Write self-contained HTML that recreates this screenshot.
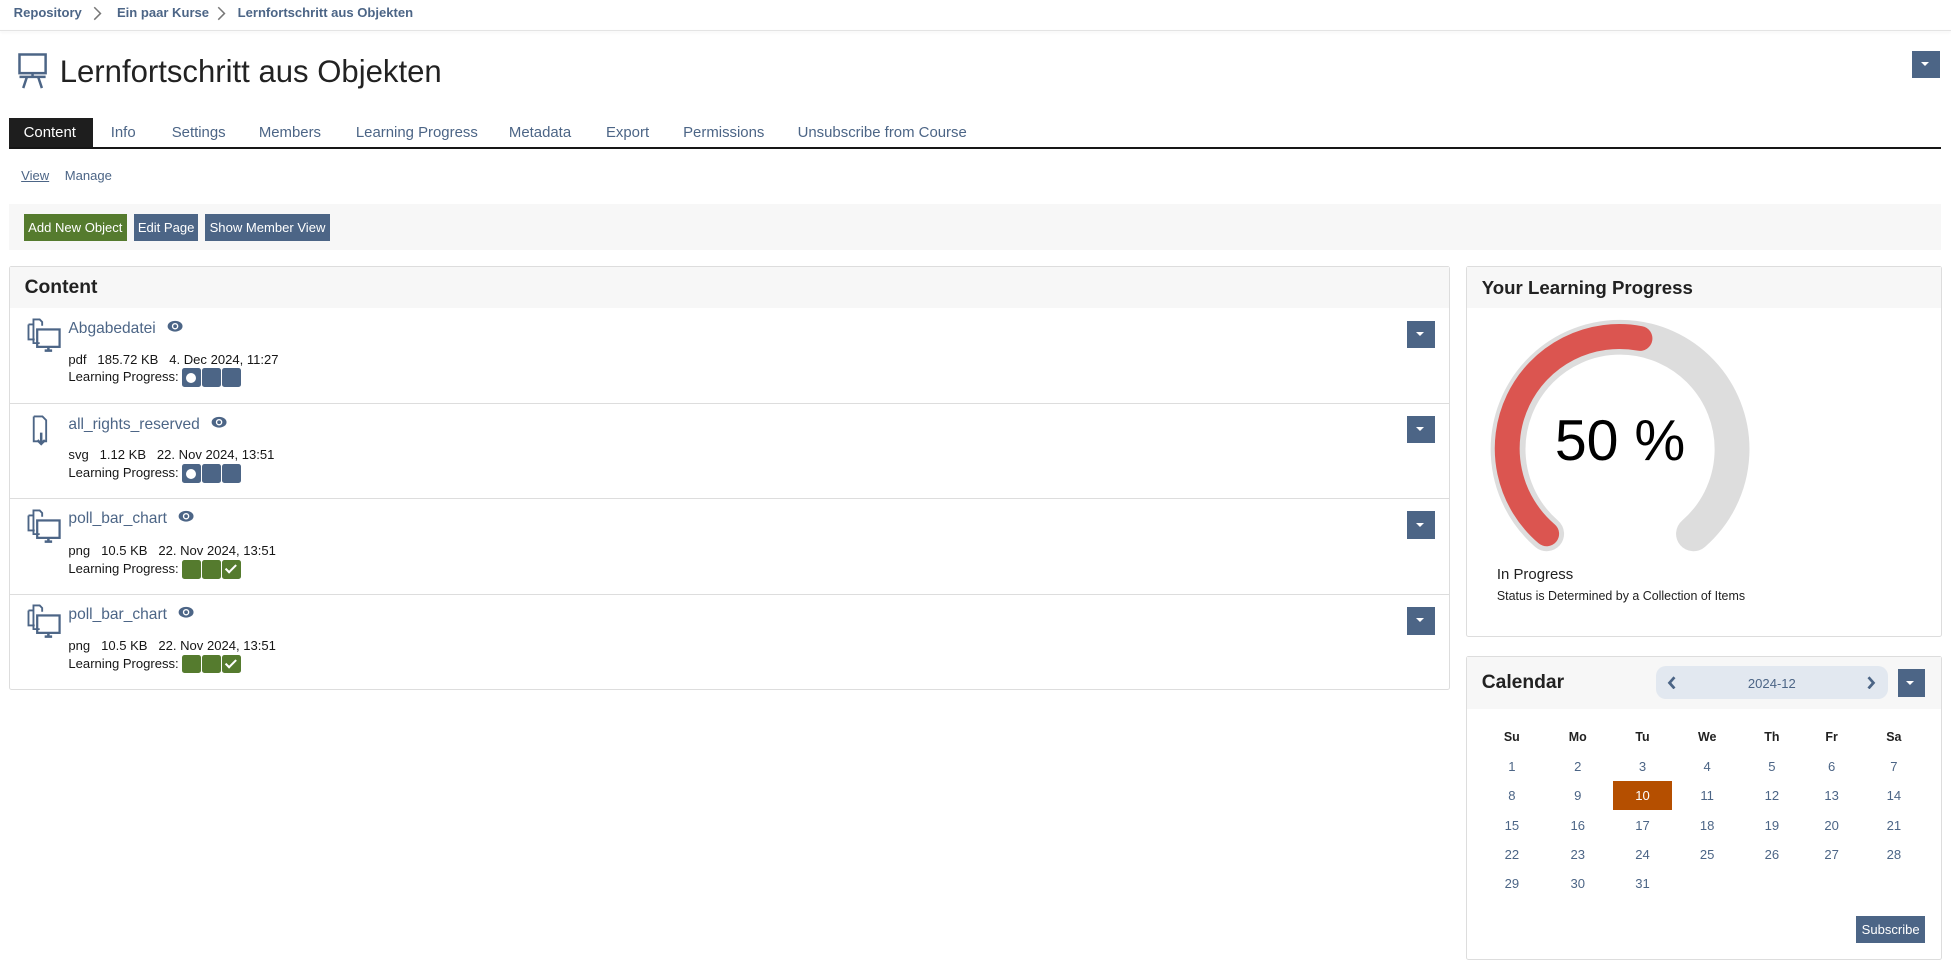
<!DOCTYPE html>
<html><head><meta charset="utf-8">
<style>
html,body{margin:0;padding:0;background:#fff;overflow:hidden;width:1951px;height:967px}
#w{zoom:1.2443;width:1568px;height:777px;position:relative;font-family:"Liberation Sans",sans-serif;color:#161616}
.a{position:absolute;white-space:nowrap}
.lnk{color:#4c6586}
.btn{position:absolute;height:22px;line-height:22px;color:#fff;font-size:10.5px;text-align:center;background:#4c6586}
.dd{position:absolute;width:22px;height:22px;background:#4c6586}
.dd:after{content:"";position:absolute;left:7px;top:9px;border-left:4px solid transparent;border-right:4px solid transparent;border-top:4px solid #fff}
.panel{position:absolute;border:1px solid #ddd;border-radius:2px;background:#fff}
.ph{position:absolute;left:0;right:0;top:0;height:33px;background:#f7f7f7}
.sq{display:inline-block;width:15px;height:15px;background:#4c6586;vertical-align:middle;margin-right:1px;position:relative;border-radius:2px}
.g{background:#557b2e}
.dot:after{content:"";position:absolute;left:3px;top:4px;width:8px;height:8px;border-radius:50%;background:#fff}
.chk:after{content:"";position:absolute;left:5px;top:2px;width:3px;height:7px;border:solid #fff;border-width:0 2px 2px 0;transform:rotate(45deg)}
.cal{position:absolute;font-size:10.5px;color:#4c6586;text-align:center;width:40px}
.tab{position:absolute;top:100px;font-size:12px;color:#4c6586;white-space:nowrap}
.eye{display:inline-block;vertical-align:middle;margin-left:9px;margin-top:-4px}
</style></head><body><div id="w">
<!-- breadcrumb -->
<div class="a lnk" style="left:11px;top:4px;font-size:10.5px;font-weight:bold">Repository</div>
<svg class="a" style="left:75px;top:5px" width="8" height="12" viewBox="0 0 8 12"><path d="M1 1l5 5-5 5" fill="none" stroke="#777" stroke-width="1.2"/></svg>
<div class="a lnk" style="left:94px;top:4px;font-size:10.5px;font-weight:bold">Ein paar Kurse</div>
<svg class="a" style="left:174px;top:5px" width="8" height="12" viewBox="0 0 8 12"><path d="M1 1l5 5-5 5" fill="none" stroke="#777" stroke-width="1.2"/></svg>
<div class="a lnk" style="left:191px;top:4px;font-size:10.5px;font-weight:bold">Lernfortschritt aus Objekten</div>
<div class="a" style="left:0;top:24px;width:1568px;height:1px;background:#e4e4e4;box-shadow:0 1px 2px rgba(0,0,0,.08)"></div>
<!-- title -->
<svg class="a" style="left:14px;top:42px" width="26" height="30" viewBox="0 0 26 30"><rect x="2" y="2" width="21" height="15" fill="none" stroke="#4c6586" stroke-width="2"/><path d="M2 20h21M8 20l-3 9M17 20l3 9M12.5 17v3" stroke="#4c6586" stroke-width="2" fill="none"/></svg>
<div class="a" style="left:48px;top:43px;font-size:25px;color:#222">Lernfortschritt aus Objekten</div>
<div class="dd" style="left:1537px;top:41px"></div>
<!-- tabs -->
<div class="a" style="left:7px;top:95px;width:68px;height:23px;background:#1e1e1e"></div>
<div class="tab" style="left:19px;color:#fff">Content</div>
<div class="tab" style="left:89px">Info</div>
<div class="tab" style="left:138px">Settings</div>
<div class="tab" style="left:208px">Members</div>
<div class="tab" style="left:286px">Learning Progress</div>
<div class="tab" style="left:409px">Metadata</div>
<div class="tab" style="left:487px">Export</div>
<div class="tab" style="left:549px">Permissions</div>
<div class="tab" style="left:641px">Unsubscribe from Course</div>
<div class="a" style="left:7px;top:118px;width:1553px;height:2px;background:#161616"></div>
<div class="a lnk" style="left:17px;top:135px;font-size:10.5px;text-decoration:underline">View</div>
<div class="a lnk" style="left:52px;top:135px;font-size:10.5px">Manage</div>
<!-- toolbar -->
<div class="a" style="left:7px;top:164px;width:1553px;height:37px;background:#f7f7f7"></div>
<div class="btn" style="left:19px;top:172px;width:83px;background:#557b2e">Add New Object</div>
<div class="btn" style="left:108px;top:172px;width:51px">Edit Page</div>
<div class="btn" style="left:165px;top:172px;width:100px">Show Member View</div>
<!-- content panel -->
<div class="panel" style="left:7px;top:214px;width:1157px;height:339px">
<div class="ph"></div>
<div class="a" style="left:12px;top:8px;font-size:15.5px;font-weight:bold;color:#222">Content</div>
</div>
<div class="a" style="left:8px;top:324px;width:1157px;height:1px;background:#ddd"></div>
<div class="a" style="left:8px;top:400px;width:1157px;height:1px;background:#ddd"></div>
<div class="a" style="left:8px;top:477px;width:1157px;height:1px;background:#ddd"></div>

<svg class="a" style="left:21px;top:255px" width="28" height="30" viewBox="0 0 28 30"><path d="M6 14V2h5l2 2v3M6 14v7h5" fill="none" stroke="#4c6586" stroke-width="1.5"/><path d="M2 6h4M2 6v12h5" fill="none" stroke="#4c6586" stroke-width="1.5"/><rect x="9" y="10" width="18" height="14" fill="none" stroke="#4c6586" stroke-width="1.8"/><path d="M15 27h6M18 24v3" stroke="#4c6586" stroke-width="2"/></svg>
<div class="a lnk" style="left:55px;top:257px;font-size:12.5px">Abgabedatei<svg class="eye" width="13" height="10" viewBox="0 0 13 10"><ellipse cx="6.5" cy="5" rx="6" ry="4.3" fill="#4c6586"/><circle cx="6.5" cy="5" r="2.6" fill="#fff"/><circle cx="6.5" cy="5" r="1.5" fill="#4c6586"/></svg></div>
<div class="a" style="left:55px;top:283px;font-size:10.5px">pdf&nbsp;&nbsp; 185.72 KB&nbsp;&nbsp; 4. Dec 2024, 11:27</div>
<div class="a" style="left:55px;top:296px;font-size:10.5px">Learning Progress: <span class="sq dot"></span><span class="sq"></span><span class="sq"></span></div>
<div class="dd" style="left:1131px;top:258px"></div>

<svg class="a" style="left:24px;top:333px" width="22" height="28" viewBox="0 0 22 28"><path d="M3 2h7l3 3v17h-3M3 2v20h4" fill="none" stroke="#4c6586" stroke-width="1.5"/><path d="M9 15v9M6 21l3 3 3-3" fill="none" stroke="#4c6586" stroke-width="2"/></svg>
<div class="a lnk" style="left:55px;top:334px;font-size:12.5px">all_rights_reserved<svg class="eye" width="13" height="10" viewBox="0 0 13 10"><ellipse cx="6.5" cy="5" rx="6" ry="4.3" fill="#4c6586"/><circle cx="6.5" cy="5" r="2.6" fill="#fff"/><circle cx="6.5" cy="5" r="1.5" fill="#4c6586"/></svg></div>
<div class="a" style="left:55px;top:359px;font-size:10.5px">svg&nbsp;&nbsp; 1.12 KB&nbsp;&nbsp; 22. Nov 2024, 13:51</div>
<div class="a" style="left:55px;top:373px;font-size:10.5px">Learning Progress: <span class="sq dot"></span><span class="sq"></span><span class="sq"></span></div>
<div class="dd" style="left:1131px;top:334px"></div>

<svg class="a" style="left:21px;top:408px" width="28" height="30" viewBox="0 0 28 30"><path d="M6 14V2h5l2 2v3M6 14v7h5" fill="none" stroke="#4c6586" stroke-width="1.5"/><path d="M2 6h4M2 6v12h5" fill="none" stroke="#4c6586" stroke-width="1.5"/><rect x="9" y="10" width="18" height="14" fill="none" stroke="#4c6586" stroke-width="1.8"/><path d="M15 27h6M18 24v3" stroke="#4c6586" stroke-width="2"/></svg>
<div class="a lnk" style="left:55px;top:410px;font-size:12.5px">poll_bar_chart<svg class="eye" width="13" height="10" viewBox="0 0 13 10"><ellipse cx="6.5" cy="5" rx="6" ry="4.3" fill="#4c6586"/><circle cx="6.5" cy="5" r="2.6" fill="#fff"/><circle cx="6.5" cy="5" r="1.5" fill="#4c6586"/></svg></div>
<div class="a" style="left:55px;top:436px;font-size:10.5px">png&nbsp;&nbsp; 10.5 KB&nbsp;&nbsp; 22. Nov 2024, 13:51</div>
<div class="a" style="left:55px;top:450px;font-size:10.5px">Learning Progress: <span class="sq g"></span><span class="sq g"></span><span class="sq g chk"></span></div>
<div class="dd" style="left:1131px;top:411px"></div>

<svg class="a" style="left:21px;top:485px" width="28" height="30" viewBox="0 0 28 30"><path d="M6 14V2h5l2 2v3M6 14v7h5" fill="none" stroke="#4c6586" stroke-width="1.5"/><path d="M2 6h4M2 6v12h5" fill="none" stroke="#4c6586" stroke-width="1.5"/><rect x="9" y="10" width="18" height="14" fill="none" stroke="#4c6586" stroke-width="1.8"/><path d="M15 27h6M18 24v3" stroke="#4c6586" stroke-width="2"/></svg>
<div class="a lnk" style="left:55px;top:487px;font-size:12.5px">poll_bar_chart<svg class="eye" width="13" height="10" viewBox="0 0 13 10"><ellipse cx="6.5" cy="5" rx="6" ry="4.3" fill="#4c6586"/><circle cx="6.5" cy="5" r="2.6" fill="#fff"/><circle cx="6.5" cy="5" r="1.5" fill="#4c6586"/></svg></div>
<div class="a" style="left:55px;top:513px;font-size:10.5px">png&nbsp;&nbsp; 10.5 KB&nbsp;&nbsp; 22. Nov 2024, 13:51</div>
<div class="a" style="left:55px;top:526px;font-size:10.5px">Learning Progress: <span class="sq g"></span><span class="sq g"></span><span class="sq g chk"></span></div>
<div class="dd" style="left:1131px;top:488px"></div>

<!-- LP panel -->
<div class="panel" style="left:1178px;top:214px;width:381px;height:296px">
<div class="ph"></div>
<div class="a" style="left:12px;top:8px;font-size:15px;font-weight:bold;color:#222">Your Learning Progress</div>
</div>
<svg class="a" style="left:0;top:0" width="1568" height="777" viewBox="0 0 1568 777" pointer-events="none">
<path d="M1243 429 A90 90 0 1 1 1361 429" fill="none" stroke="#dddddd" stroke-width="28" stroke-linecap="round"/>
<path d="M1243 429 A90 90 0 0 1 1318 272" fill="none" stroke="#db5550" stroke-width="20" stroke-linecap="round"/>
</svg>
<div class="a" style="left:1202px;top:328px;width:200px;text-align:center;font-size:46px;color:#000">50 %</div>
<div class="a" style="left:1203px;top:455px;font-size:12px;color:#222">In Progress</div>
<div class="a" style="left:1203px;top:473px;font-size:10px;color:#222">Status is Determined by a Collection of Items</div>

<!-- Calendar -->
<div class="panel" style="left:1178px;top:527px;width:381px;height:243px">
<div class="ph" style="height:42px"></div>
<div class="a" style="left:12px;top:12px;font-size:15.5px;font-weight:bold;color:#222">Calendar</div>
</div>
<div class="a" style="left:1331px;top:535px;width:186px;height:27px;background:#e2e8f0;border-radius:8px"></div>
<svg class="a" style="left:1340px;top:543px" width="8" height="11" viewBox="0 0 8 11"><path d="M6 1L2 5.5 6 10" fill="none" stroke="#4c6586" stroke-width="2.2"/></svg>
<svg class="a" style="left:1500px;top:543px" width="8" height="11" viewBox="0 0 8 11"><path d="M2 1l4 4.5L2 10" fill="none" stroke="#4c6586" stroke-width="2.2"/></svg>
<div class="a lnk" style="left:1331px;top:543px;width:186px;text-align:center;font-size:10.5px">2024-12</div>
<div class="dd" style="left:1525px;top:538px"></div>
<div class="a" style="left:1296px;top:628px;width:48px;height:23px;background:#b54f00"></div>
<div id="cal"></div>
<div class="btn" style="left:1492px;top:736px;width:55px">Subscribe</div>
<script>
var xs=[1215,1268,1320,1372,1424,1472,1522],h="";
var d=["Su","Mo","Tu","We","Th","Fr","Sa"];
for(var i=0;i<7;i++)h+='<div class="cal" style="left:'+(xs[i]-20)+'px;top:587px;color:#222;font-weight:bold;font-size:10px">'+d[i]+'</div>';
var ys=[610,633,657,681,704];
for(var n=1;n<=31;n++){var r=Math.floor((n-1)/7),c=(n-1)%7;h+='<div class="cal" style="left:'+(xs[c]-20)+'px;top:'+ys[r]+'px'+(n==10?';color:#fff':'')+'">'+n+'</div>';}
document.getElementById("cal").innerHTML=h;
</script>
</div></body></html>
